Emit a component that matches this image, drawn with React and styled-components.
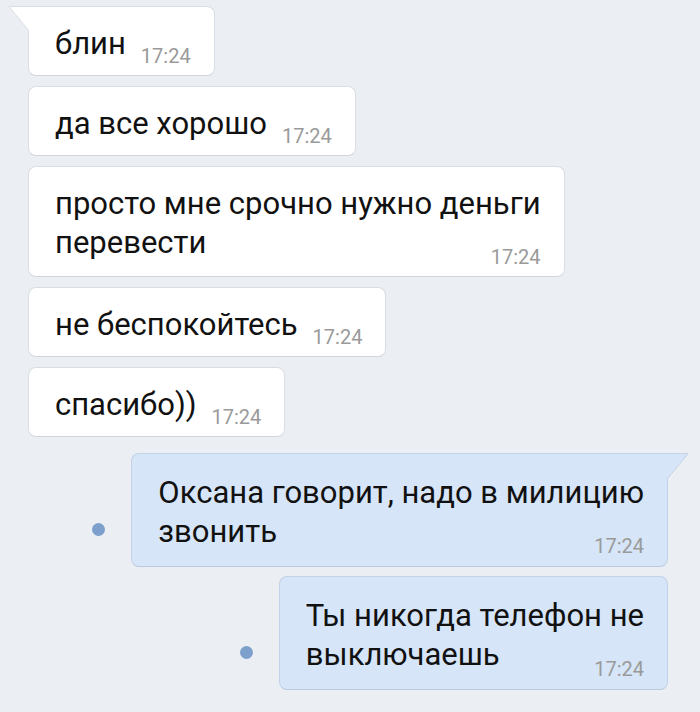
import styled, { createGlobalStyle } from "styled-components";

const Global = createGlobalStyle`
  html, body {
    margin: 0;
    padding: 0;
    background: #ebeef2;
  }
  body {
    font-family: Roboto, "Noto Sans", sans-serif;
  }
`;

const Page = styled.div`
  width: 700px;
  min-height: 712px;
  background: #ebeef2;
  padding: 6px 0 0;
  box-sizing: border-box;
  display: flex;
  flex-direction: column;
`;

const Row = styled.div`
  display: flex;
  align-items: center;
  justify-content: ${(p) => (p.out ? "flex-end" : "flex-start")};
  padding: ${(p) => (p.out ? "0 32px 0 0" : "0 0 0 28px")};
  margin-top: ${(p) => p.gap}px;
`;

const Bubble = styled.div`
  position: relative;
  display: flex;
  flex-direction: ${(p) => (p.multi ? "column" : "row")};
  align-items: flex-end;
  gap: ${(p) => (p.multi ? 0 : 15)}px;
  padding: ${(p) => (p.out ? "19px 23px 13px 26px" : "17px 23px 12px 26px")};
  background: ${(p) => (p.out ? "#d6e5f7" : "#ffffff")};
  border: 1px solid ${(p) => (p.out ? "#c3d2e6" : "#dadee4")};
  border-bottom-color: ${(p) => (p.out ? "#b9c9de" : "#d0d5dc")};
  border-radius: 8px;
  ${(p) => p.tail && (p.out ? "border-top-right-radius: 0;" : "border-top-left-radius: 0;")}
`;

const Text = styled.div`
  font-size: 31px;
  line-height: 39px;
  color: #111;
  white-space: nowrap;
`;

const Time = styled.span`
  font-size: 20px;
  line-height: 1;
  color: #9a9a9a;
  margin-bottom: -3px;
  ${(p) => p.multi && "margin-top: -15px;"}
`;

const Tail = styled.svg`
  position: absolute;
  top: -1px;
  ${(p) => (p.out ? "right: -22px;" : "left: -21px;")}
  width: 22px;
  height: 26px;
  overflow: visible;
`;

const Dot = styled.span`
  width: 13px;
  height: 13px;
  border-radius: 50%;
  background: #7c9fcb;
  margin: 38px 26px 0 0;
  flex-shrink: 0;
`;

const messages = [
  { lines: ["блин"], tail: true, gap: 0 },
  { lines: ["да все хорошо"], gap: 10 },
  { lines: ["просто мне срочно нужно деньги", "перевести"], gap: 10 },
  { lines: ["не беспокойтесь"], gap: 10 },
  { lines: ["спасибо))"], gap: 10 },
  { lines: ["Оксана говорит, надо в милицию", "звонить"], out: true, tail: true, gap: 16 },
  { lines: ["Ты никогда телефон не", "выключаешь"], out: true, gap: 9 },
];

function TailShape({ out }) {
  const fill = out ? "#d6e5f7" : "#ffffff";
  const stroke = out ? "#c3d2e6" : "#dadee4";
  return out ? (
    <Tail out viewBox="0 0 22 26">
      <path d="M0 0.5 L21 0.5 L1 25 L0 25 Z" fill={fill} />
      <path d="M0 0.5 L21 0.5 L1 25" fill="none" stroke={stroke} />
    </Tail>
  ) : (
    <Tail viewBox="0 0 22 26">
      <path d="M22 0.5 L1 0.5 L21 25 L22 25 Z" fill={fill} />
      <path d="M22 0.5 L1 0.5 L21 25" fill="none" stroke={stroke} />
    </Tail>
  );
}

export default function App() {
  return (
    <>
      <Global />
      <Page>
        {messages.map((m, i) => {
          const multi = m.lines.length > 1;
          return (
            <Row key={i} out={m.out} gap={m.gap}>
              {m.out && <Dot />}
              <Bubble out={m.out} tail={m.tail} multi={multi}>
                {m.tail && <TailShape out={m.out} />}
                <Text>
                  {m.lines.map((l, j) => (
                    <div key={j}>{l}</div>
                  ))}
                </Text>
                <Time multi={multi}>17:24</Time>
              </Bubble>
            </Row>
          );
        })}
      </Page>
    </>
  );
}
